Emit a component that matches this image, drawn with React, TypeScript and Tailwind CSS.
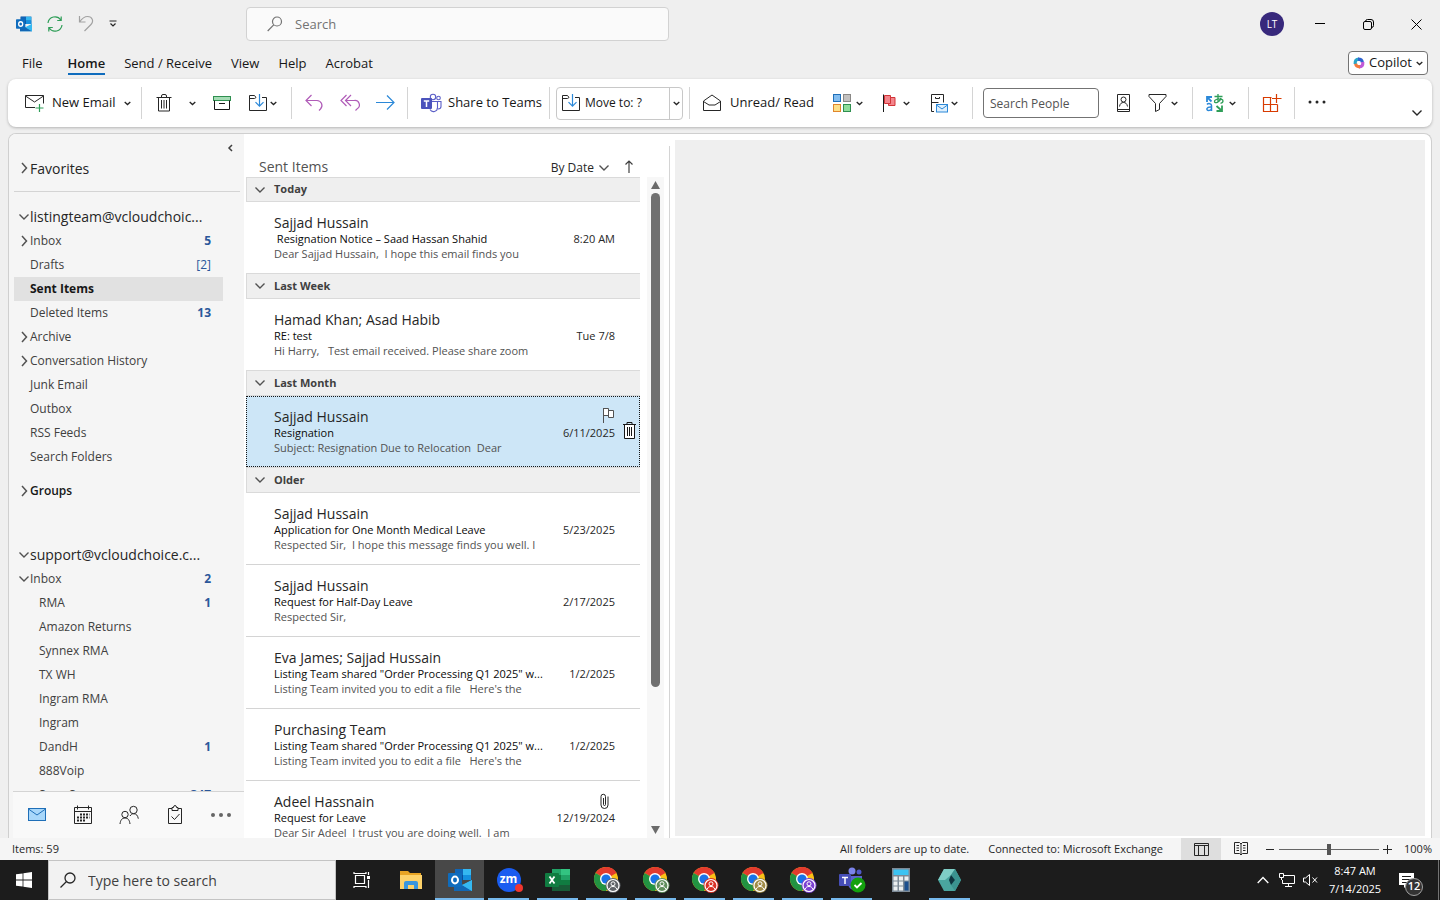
import { ReactNode } from "react";

type IconProps = { className?: string };

type SvgProps = {
  w?: number;
  h?: number;
  className?: string;
  children: ReactNode;
};

const Svg = ({ w = 20, h = 20, className = "", children }: SvgProps) => (
  <svg
    width={w}
    height={h}
    viewBox={`0 0 ${w} ${h}`}
    fill="none"
    stroke="currentColor"
    className={`shrink-0 ${className}`}
    aria-hidden="true"
  >
    {children}
  </svg>
);

/* Small shared icons */
const Caret = ({ className = "text-neutral-800" }: IconProps) => (
  <Svg w={7} h={5} className={className}>
    <path d="M.7 1l2.8 2.6L6.3 1" strokeWidth="1.3" />
  </Svg>
);

const ChevronDown = ({ className = "text-neutral-600" }: IconProps) => (
  <Svg w={12} h={8} className={className}>
    <path d="M1.5 1.5L6 6l4.5-4.5" strokeWidth="1.4" />
  </Svg>
);

const ChevronRight = ({ className = "text-neutral-600" }: IconProps) => (
  <Svg w={12} h={12} className={className}>
    <path d="M4 1l4.5 5L4 11" strokeWidth="1.5" />
  </Svg>
);

const TrashIcon = ({ className = "text-neutral-800" }: IconProps) => (
  <Svg w={16} h={20} className={className}>
    <path d="M.5 4.5h15M5.5 4.5V3q0-1.5 1.500-1.500h2q1.500 0 1.500 1.500v1.500M2.500 4.500v13.500h11V4.500M5.500 7v8.500M8 7v8.500M10.500 7v8.500" />
  </Svg>
);

const OutlookIcon = ({ size }: { size: number }) => (
  <svg width={size} height={size} viewBox="0 0 24 24" aria-hidden="true">
    <path d="M7 1h16v11H7z" fill="#0a4f9e" />
    <path d="M7 1h8v6H7z" fill="#1066b8" />
    <path d="M15 1h8v6h-8z" fill="#35b8f1" />
    <path d="M15 7h8v5h-8z" fill="#1490df" />
    <path d="M6 12l9 5 9-5v11H6z" fill="#28a8ea" />
    <path d="M6 12l18 11H6z" fill="#1267b4" />
    <path d="M24 12v11l-10-6z" fill="#35b8f1" />
    <rect y="5" width="14" height="14" rx="1" fill="#0f6cbd" />
    <ellipse cx="7" cy="12" rx="3" ry="3.400" fill="none" stroke="#fff" strokeWidth="2" />
  </svg>
);

const TeamsIcon = ({ className = "" }: IconProps) => (
  <Svg w={22} h={20} className={className}>
    <g stroke="#5b5fc7" strokeWidth="1.100">
      <circle cx="13" cy="4" r="2.700" />
      <circle cx="18.500" cy="5" r="1.800" />
      <path d="M12 8.500h5.500v6a4 4 0 0 1-7.500 2M17.500 8.500H21v5q0 2.500-3 2.500" />
    </g>
    <rect x="1" y="5" width="11" height="11" rx="1" fill="#4b53bc" stroke="none" />
    <path d="M3.800 8h5.400M6.500 8v6" stroke="#fff" strokeWidth="1.500" />
  </Svg>
);

const MoveIcon = () => (
  <Svg>
    <path d="M8 4.500L6.500 2.500h-5v15h17v-13H14M1.500 5.500h5L8 4.500" className="text-neutral-800" />
    <path d="M11.500 1v12M7.500 9.200l4 4 4-4" stroke="#2b88d8" strokeWidth="1.200" />
  </Svg>
);

/* Title bar */
const TitleBar = () => (
  <header className="flex h-12 shrink-0 items-center">
    <div className="flex w-[246px] shrink-0 items-center gap-[15px] pl-4">
      <OutlookIcon size={16} />
      <button type="button" aria-label="Send and receive all folders">
        <Svg w={16} h={16} className="text-[#2f9e58]">
          <path
            d="M1 7a7 7 0 0 1 12.800-3M15 9a7 7 0 0 1-12.800 3M14.200.500v4h-4M1.800 15.500v-4h4"
            strokeWidth="1.200"
          />
        </Svg>
      </button>
      <button type="button" aria-label="Undo">
        <Svg w={16} h={18} className="text-neutral-400">
          <path d="M1.500 1v6h6M1.500 7C4 3.500 6.500 1.500 9.500 1.500c5 0 6.500 5 3.500 8L6.500 16" strokeWidth="1.200" />
        </Svg>
      </button>
      <button type="button" aria-label="Customize toolbar">
        <Svg w={9} h={8} className="text-neutral-800">
          <path d="M.500 1h7M1.500 3.500l2.500 2.500 2.500-2.500" strokeWidth="1.200" />
        </Svg>
      </button>
    </div>

    <label className="flex h-[34px] w-[423px] items-center gap-3 rounded border border-[#d2d2d2] bg-[#fafafa] pl-5 text-neutral-500">
      <Svg w={16} h={16}>
        <circle cx="10" cy="5.500" r="4.500" strokeWidth="1.200" />
        <path d="M6.700 8.800L.700 15" strokeWidth="1.200" />
      </Svg>
      <input
        type="search"
        aria-label="Search"
        placeholder="Search"
        className="min-w-0 flex-1 bg-transparent pt-0.5 text-[13px] outline-none placeholder:text-neutral-500"
      />
    </label>

    <div className="ml-auto flex items-center">
      <button
        type="button"
        className="mr-3 size-6 rounded-full bg-[#38297c] text-[10px] text-white"
      >
        LT
      </button>
      <button type="button" aria-label="Minimize" className="flex h-12 w-12 items-center justify-center">
        <Svg w={10} h={10}>
          <path d="M0 4.500h10" />
        </Svg>
      </button>
      <button type="button" aria-label="Restore" className="flex h-12 w-12 items-center justify-center">
        <Svg w={11} h={11}>
          <rect x=".500" y="2.500" width="8" height="8" rx="1.500" />
          <path d="M2.500 2.500q0-2 2-2H8q2.500 0 2.500 2.500v3.500q0 2-2 2" />
        </Svg>
      </button>
      <button type="button" aria-label="Close" className="flex h-12 w-12 items-center justify-center">
        <Svg w={11} h={11}>
          <path d="M.500.500l10 10M10.500.500l-10 10" />
        </Svg>
      </button>
    </div>
  </header>
);

/* Ribbon tabs */
const tabs = ["Send / Receive", "View", "Help", "Acrobat"];

const CopilotIcon = () => (
  <svg width="12" height="12" viewBox="0 0 12 12" fill="none" strokeWidth="3.200" aria-hidden="true">
    <path d="M2.200 7C2 3.500 3 2.200 6 2.200" stroke="#2aa5c8" />
    <path d="M5 2.200c3.500 0 4 1 4.300 3" stroke="#2f62d0" />
    <path d="M9.800 5c.200 3.500-.800 4.800-3.800 4.800" stroke="#c05ad8" />
    <path d="M7 9.800c-3.500 0-4-1-4.300-3" stroke="#f5793b" />
  </svg>
);

const RibbonTabs = () => (
  <nav className="flex h-[31px] shrink-0 items-start pr-3 pl-[22px] text-[13px] text-neutral-900">
    <a href="#file" className="mr-[25px] leading-[30px]">
      File
    </a>
    <div className="flex gap-[19px]">
      <a href="#home" className="h-[27px] border-b-2 border-[#0f6cbd] leading-[30px] font-semibold">
        Home
      </a>
      {tabs.map((tab) => (
        <a key={tab} href={`#${tab}`} className="leading-[30px]">
          {tab}
        </a>
      ))}
    </div>
    <button
      type="button"
      className="mt-[3px] ml-auto flex h-6 w-20 items-center justify-center gap-1 rounded border border-neutral-500 bg-white"
    >
      <CopilotIcon />
      Copilot
      <Caret />
    </button>
  </nav>
);

/* Ribbon */
const Ribbon = () => (
  <div className="mx-2 flex h-12 shrink-0 items-center rounded-lg bg-white text-[13px] whitespace-nowrap text-neutral-900 shadow-[0_1px_3px_rgba(0,0,0,0.25)]">
    <div className="flex h-8 w-[134px] shrink-0 items-center gap-2 border-r border-neutral-300 pl-4">
      <button type="button" className="flex items-center gap-2">
        <Svg>
          <path d="M11 14.500H1.500v-12h18v8M1.500 3l9 6 9-6" className="text-neutral-800" />
          <path d="M15.500 11v8M11.500 15h8" stroke="#2f9e58" strokeWidth="1.200" />
        </Svg>
        New Email
      </button>
      <button type="button" aria-label="New items">
        <Caret />
      </button>
    </div>

    <div className="flex h-8 w-[150px] shrink-0 items-center justify-between border-r border-neutral-300 pr-3.5 pl-3.5">
      <button type="button" aria-label="Delete">
        <TrashIcon />
      </button>
      <button type="button" aria-label="Delete options">
        <Caret />
      </button>
      <button type="button" aria-label="Archive">
        <Svg w={18}>
          <rect x=".500" y="3.500" width="17" height="4" fill="#a5dcb5" stroke="#2f8f50" />
          <path d="M1.500 7.500v9h15v-9" />
          <path d="M6 10.500h6" />
        </Svg>
      </button>
      <button type="button" aria-label="Move" className="flex items-center gap-0.5">
        <MoveIcon />
        <Caret />
      </button>
    </div>

    <div className="flex h-8 w-[116px] shrink-0 items-center justify-between border-r border-neutral-300 pr-3 pl-3">
      <button type="button" aria-label="Reply">
        <Svg className="text-[#b05cb8]">
          <path d="M7.500 2l-5.500 5.500 5.500 5.500M2 7.500h11a5 5 0 0 1 3.500 8.500l-1.500 1.500" strokeWidth="1.200" />
        </Svg>
      </button>
      <button type="button" aria-label="Reply all">
        <Svg className="text-[#b05cb8]">
          <path
            d="M6.500 2L1 7.500 6.500 13M11 2L5.500 7.500 11 13M5.500 7.500H14a4.500 4.500 0 0 1 3.300 8.200L15.500 17.500"
            strokeWidth="1.200"
          />
        </Svg>
      </button>
      <button type="button" aria-label="Forward">
        <Svg className="text-[#2b88d8]">
          <path d="M1 9.500h18M12 2.500l7 7-7 7" strokeWidth="1.200" />
        </Svg>
      </button>
    </div>

    <div className="flex h-8 w-[142px] shrink-0 items-center border-r border-neutral-300 pl-3">
      <button type="button" className="flex items-center gap-1.5">
        <TeamsIcon />
        Share to Teams
      </button>
    </div>

    <div className="flex h-8 w-[140px] shrink-0 items-center border-r border-neutral-300 px-1.5">
      <div className="flex h-[33px] flex-1 rounded border border-[#c8c8c8] text-[12px]">
        <button type="button" className="flex flex-1 items-center gap-1 pl-1">
          <MoveIcon />
          Move to: ?
        </button>
        <button
          type="button"
          aria-label="More quick steps"
          className="flex w-[13px] items-center justify-center border-l border-[#c8c8c8]"
        >
          <Caret />
        </button>
      </div>
    </div>

    <div className="flex h-8 w-[283px] shrink-0 items-center justify-between border-r border-neutral-300 pr-3.5 pl-3">
      <button type="button" className="flex items-center gap-2">
        <Svg>
          <path d="M1.500 8l8.500-6 8.500 6v9.500h-17zM1.500 8.500L7 12h6l5.500-3.500" className="text-neutral-800" />
        </Svg>
        Unread/ Read
      </button>
      <button type="button" aria-label="Categorize" className="flex items-center gap-1">
        <Svg w={19}>
          <rect x=".500" y="1.500" width="7" height="7" fill="#83bdf0" stroke="#1f6fb8" />
          <rect x="10.500" y="1.500" width="7" height="7" fill="#c3c1c0" stroke="#8a8886" />
          <rect x=".500" y="11.500" width="7" height="7" fill="#fde08a" stroke="#e0862c" />
          <rect x="10.500" y="11.500" width="7" height="7" fill="#8fdd9a" stroke="#2f8f50" />
        </Svg>
        <Caret />
      </button>
      <button type="button" aria-label="Follow up" className="flex items-center gap-1.5">
        <Svg w={15}>
          <path d="M2.500 2.500h6v8h-6z" fill="#f4858c" stroke="#d13438" />
          <path d="M8.500 4.500h4.500v8H6.500v-2h2z" fill="#f4858c" stroke="#d13438" />
          <path d="M1.500 1.500V19" />
        </Svg>
        <Caret />
      </button>
      <button type="button" aria-label="Rules" className="flex items-center gap-0.5">
        <Svg className="text-neutral-800">
          <path d="M5 18.500H2.500V1.500h12v8M2.500 9.500h7M6.500 4v1.500h4V4" />
          <rect x="7.500" y="11.500" width="11" height="7.500" fill="#dff0fd" stroke="#2b88d8" />
          <path d="M7.500 12l5.500 4 5.500-4" stroke="#2b88d8" />
        </Svg>
        <Caret />
      </button>
    </div>

    <div className="flex h-8 w-[220px] shrink-0 items-center justify-between border-r border-neutral-300 pr-3.5 pl-2.5">
      <input
        type="text"
        aria-label="Search People"
        placeholder="Search People"
        className="h-[30px] w-[116px] rounded border border-neutral-500 px-1.5 text-[12px] outline-none placeholder:text-neutral-600"
      />
      <button type="button" aria-label="Address book">
        <Svg w={14} className="text-neutral-800">
          <path d="M.500 1.500h12v17H.500zM.500 16.500h12" />
          <circle cx="6.500" cy="6.500" r="2.500" />
          <path d="M2.500 13.500c.500-3 2-4 4-4s3.500 1 4 4" />
        </Svg>
      </button>
      <button type="button" aria-label="Filter email" className="flex items-center gap-1">
        <Svg w={19} className="text-neutral-800">
          <path d="M1 1.500h17v2l-6.500 7v6l-4 2v-8L1 3.500z" />
        </Svg>
        <Caret />
      </button>
    </div>

    <div className="flex h-8 w-14 shrink-0 items-center justify-center border-r border-neutral-300">
      <button type="button" aria-label="Translate" className="flex items-center gap-1">
        <Svg w={20}>
          <g stroke="#2b88d8" strokeWidth="1.500">
            <path d="M2 11.500c1-1.300 4.500-1.300 4.500 1V18M6.500 14c-5.500-.500-5.500 3.500-3 3.500 1.500 0 3-1 3-2" />
            <path d="M6.500 8.500L2.500 4.500M2 9V4h5" strokeWidth="1.800" />
          </g>
          <g stroke="#2f9e58" strokeWidth="1.300">
            <path d="M9.500 3.500h8M13 1v8.500M16 5c-1 4.500-6.500 6-6.500 3.500s8.500-3.500 8.500-.500c0 1.500-1 2-2.500 2.300" />
            <path d="M11.500 13l4.500 4M17 12.500V18h-5.500" strokeWidth="1.800" />
          </g>
        </Svg>
        <Caret />
      </button>
    </div>

    <div className="flex h-8 w-[46px] shrink-0 items-center justify-center border-r border-neutral-300">
      <button type="button" aria-label="All apps">
        <Svg className="text-[#d83b01]">
          <path d="M9.500 4.500h-8v14h14v-7M1.500 11.500h14M8.500 4.500v14M14.500 1v9M10 5.500h9.500" strokeWidth="1.200" />
        </Svg>
      </button>
    </div>

    <button type="button" aria-label="More commands" className="ml-3">
      <Svg className="text-neutral-800">
        <g fill="currentColor" stroke="none">
          <circle cx="3" cy="9" r="1.500" />
          <circle cx="10" cy="9" r="1.500" />
          <circle cx="17" cy="9" r="1.500" />
        </g>
      </Svg>
    </button>
    <button type="button" aria-label="Ribbon display options" className="mr-[9px] mb-2.5 ml-auto self-end">
      <ChevronDown className="text-neutral-800" />
    </button>
  </div>
);

/* Folder pane */
type Folder = {
  name: string;
  count?: string;
  plain?: boolean;
  arrow?: "right" | "down";
  active?: boolean;
  nested?: boolean;
};

const listingFolders: Folder[] = [
  { name: "Inbox", count: "5", arrow: "right" },
  { name: "Drafts", count: "[2]", plain: true },
  { name: "Sent Items", active: true },
  { name: "Deleted Items", count: "13" },
  { name: "Archive", arrow: "right" },
  { name: "Conversation History", arrow: "right" },
  { name: "Junk Email" },
  { name: "Outbox" },
  { name: "RSS Feeds" },
  { name: "Search Folders" },
];

const supportFolders: Folder[] = [
  { name: "Inbox", count: "2", arrow: "down" },
  { name: "RMA", count: "1", nested: true },
  { name: "Amazon Returns", nested: true },
  { name: "Synnex RMA", nested: true },
  { name: "TX WH", nested: true },
  { name: "Ingram RMA", nested: true },
  { name: "Ingram", nested: true },
  { name: "DandH", count: "1", nested: true },
  { name: "888Voip", nested: true },
  { name: "Spex Ser", count: "347", nested: true },
];

const FolderRow = ({ name, count, plain, arrow, active, nested }: Folder) => (
  <li className={`mr-[21px] ml-[5px] ${active ? "bg-[#e1e1e1]" : ""}`}>
    <button
      type="button"
      className={`flex h-6 w-full items-center pr-3 pl-1 text-left ${
        active ? "font-bold text-neutral-900" : "text-neutral-700"
      }`}
    >
      <span className={nested ? "w-[21px]" : "w-3"}>
        {arrow === "right" && <ChevronRight />}
        {arrow === "down" && <ChevronDown />}
      </span>
      <span className="flex-1">{name}</span>
      <span className={`text-[#2b579a] ${plain ? "" : "font-bold"}`}>{count}</span>
    </button>
  </li>
);

const Account = ({ name }: { name: string }) => (
  <button type="button" className="flex h-[25px] items-center pl-[9px] text-[14px] text-neutral-800">
    <ChevronDown />
    {name}
  </button>
);

const FolderPane = () => (
  <aside className="flex w-[235px] shrink-0 flex-col bg-[#f5f5f5] text-[12px]">
    <div className="min-h-0 flex-1 overflow-hidden">
      <div className="flex h-[22px] items-end justify-end pr-2.5 pb-1">
        <button type="button" aria-label="Collapse folder pane">
          <Svg w={7} h={8} className="text-neutral-700">
            <path d="M5 1L2 4l3 3" strokeWidth="1.500" />
          </Svg>
        </button>
      </div>
      <button type="button" className="flex h-6 items-center pl-[9px] text-[14px] text-neutral-800">
        <ChevronRight />
        Favorites
      </button>
      <hr className="mt-[11px] mr-1 mb-3 ml-[5px] border-neutral-300" />

      <Account name="listingteam@vcloudchoic..." />
      <ul>
        {listingFolders.map((folder) => (
          <FolderRow key={folder.name} {...folder} />
        ))}
      </ul>

      <button type="button" className="mt-2.5 flex h-6 items-center pl-[9px] font-semibold text-neutral-900">
        <ChevronRight />
        Groups
      </button>

      <div className="mt-[39px]">
        <Account name="support@vcloudchoice.c..." />
      </div>
      <ul>
        {supportFolders.map((folder) => (
          <FolderRow key={folder.name} {...folder} />
        ))}
      </ul>
    </div>

    <nav className="ml-1 flex h-[47px] shrink-0 items-center justify-between border-t border-neutral-300 bg-[#f9f9f9] pr-[13px] pl-[14px] text-neutral-800">
      <button type="button" aria-label="Mail">
        <Svg>
          <rect x="1.500" y="3.500" width="17" height="12" fill="#a8d7fa" stroke="#1f6fb8" />
          <path d="M1.500 4l8.500 6 8.500-6" stroke="#1f6fb8" />
        </Svg>
      </button>
      <button type="button" aria-label="Calendar">
        <Svg>
          <path d="M1.500 2.500h17v16h-17zM1.500 6.500h17M4.500.500v4M15.500.500v4" />
          <path d="M7 9.500h9.500M4 12.500h12.500M4 15.500h9" strokeDasharray="2 1" strokeWidth="2" />
        </Svg>
      </button>
      <button type="button" aria-label="People">
        <Svg>
          <circle cx="6" cy="9.500" r="3.200" />
          <circle cx="14.500" cy="5" r="3.700" />
          <path d="M1 19c.500-4 2-6 5-6s4.500 2 5 6M11 11c1-1.500 2-2.300 3.500-2.300 3 0 4.300 2 4.800 5" />
        </Svg>
      </button>
      <button type="button" aria-label="Tasks">
        <Svg>
          <path d="M7 3.500H3.500v15h13v-15H13M7 5.500v-3h1.500Q8.500.500 10 .500t1.500 2H13v3zM6.500 11.500l3 3 5-5.500" />
        </Svg>
      </button>
      <button type="button" aria-label="More">
        <Svg>
          <g fill="#666" stroke="none">
            <circle cx="2" cy="10" r="2" />
            <circle cx="10" cy="10" r="2" />
            <circle cx="18" cy="10" r="2" />
          </g>
        </Svg>
      </button>
    </nav>
  </aside>
);

/* Message list */
type Message = {
  from: string;
  subject: string;
  preview: string;
  date: string;
  selected?: boolean;
  attachment?: boolean;
};

const groups: { title: string; messages: Message[] }[] = [
  {
    title: "Today",
    messages: [
      {
        from: "Sajjad Hussain",
        subject: " Resignation Notice – Saad Hassan Shahid",
        preview: "Dear Sajjad Hussain,  I hope this email finds you",
        date: "8:20 AM",
      },
    ],
  },
  {
    title: "Last Week",
    messages: [
      {
        from: "Hamad Khan; Asad Habib",
        subject: "RE: test",
        preview: "Hi Harry,   Test email received. Please share zoom",
        date: "Tue 7/8",
      },
    ],
  },
  {
    title: "Last Month",
    messages: [
      {
        from: "Sajjad Hussain",
        subject: "Resignation",
        preview: "Subject: Resignation Due to Relocation  Dear",
        date: "6/11/2025",
        selected: true,
      },
    ],
  },
  {
    title: "Older",
    messages: [
      {
        from: "Sajjad Hussain",
        subject: "Application for One Month Medical Leave",
        preview: "Respected Sir,  I hope this message finds you well. I",
        date: "5/23/2025",
      },
      {
        from: "Sajjad Hussain",
        subject: "Request for Half-Day Leave",
        preview: "Respected Sir,",
        date: "2/17/2025",
      },
      {
        from: "Eva James; Sajjad Hussain",
        subject: 'Listing Team shared "Order Processing Q1 2025" w...',
        preview: "Listing Team invited you to edit a file   Here's the",
        date: "1/2/2025",
      },
      {
        from: "Purchasing Team",
        subject: 'Listing Team shared "Order Processing Q1 2025" w...',
        preview: "Listing Team invited you to edit a file   Here's the",
        date: "1/2/2025",
      },
      {
        from: "Adeel Hassnain",
        subject: "Request for Leave",
        preview: "Dear Sir Adeel  I trust you are doing well.  I am",
        date: "12/19/2024",
        attachment: true,
      },
    ],
  },
];

const MessageRow = ({ from, subject, preview, date, selected, attachment }: Message) => (
  <li
    className={`relative box-content flex h-[59px] pt-3 pr-[25px] pl-7 whitespace-pre ${
      selected ? "bg-[#cde6f7] outline-1 -outline-offset-1 outline-dotted outline-neutral-900" : ""
    }`}
  >
    <div className="min-w-0 flex-1">
      <p className="text-[14px] leading-[17px] text-neutral-800">{from}</p>
      <p className="text-[11px] leading-[15px] text-neutral-950">{subject}</p>
      <p className="text-[11px] leading-[15px] text-neutral-600">{preview}</p>
    </div>
    <div className="flex flex-col items-end">
      <div className="h-[17px]">
        {selected && (
          <Svg w={14} h={17} className="text-neutral-600">
            <path d="M2.500 15V0M2.500.500h5v7h-5M7.500 2.500h5v7h-5z" fill="#fff" />
          </Svg>
        )}
        {attachment && (
          <Svg w={14} h={17} className="mr-1 text-neutral-800">
            <path d="M6.500 5v6.500a1 1 0 0 0 2 0V3.500a2.200 2.200 0 0 0-4.500 0v8.500a3.500 3.500 0 0 0 7 0V3.500" />
          </Svg>
        )}
      </div>
      <p className="text-[11px] leading-[15px] text-neutral-800">{date}</p>
    </div>
    {selected && (
      <button type="button" aria-label="Delete message" className="absolute top-[25px] right-[3px]">
        <Svg w={16} h={19} className="text-neutral-900">
          <path d="M3.500 3.500h10v14h-10z" fill="#fff" />
          <path d="M2 3.500h13M6 3V1.500h5V3M6.500 6v9M8.500 6v9M10.500 6v9" />
        </Svg>
      </button>
    )}
  </li>
);

const MessageList = () => (
  <section className="flex w-[426px] shrink-0 flex-col overflow-hidden bg-white pt-3">
    <div className="flex min-h-0 flex-1 border-r border-neutral-300">
      <div className="ml-0.5 flex min-w-0 flex-1 flex-col overflow-hidden">
        <div className="flex h-[31px] shrink-0 items-end pb-px pl-[13px]">
          <h1 className="flex-1 text-[14px] leading-[18px] text-neutral-600">Sent Items</h1>
          <button type="button" className="flex items-center gap-1 text-[12px] leading-[17px] text-neutral-800">
            By Date
            <ChevronDown />
          </button>
          <button type="button" aria-label="Reverse sort order" className="mr-1 ml-3 pb-0.5">
            <Svg w={14} h={14} className="text-neutral-700">
              <path d="M7 13V1M3.500 4.500L7 1l3.500 3.500" strokeWidth="1.200" />
            </Svg>
          </button>
        </div>
        {groups.map((group, i) => (
          <div key={group.title} className="shrink-0">
            <button
              type="button"
              className={`flex w-full items-center gap-2 border-t border-b border-l border-[#dadada] bg-[#efefef] pl-[7px] text-[11px] font-bold text-neutral-700 ${
                i === 0 ? "h-[25px]" : "h-[26px]"
              }`}
            >
              <ChevronDown />
              {group.title}
            </button>
            <ul className={group.messages.length > 1 ? "divide-y divide-neutral-300" : ""}>
              {group.messages.map((message, j) => (
                <MessageRow key={j} {...message} />
              ))}
            </ul>
          </div>
        ))}
      </div>

      <div className="mt-[31px] mr-[5px] ml-[7px] flex w-[17px] flex-col items-center bg-[#f7f7f7] py-1">
        <Svg w={9} h={8}>
          <path d="M4.500 0L9 8H0z" fill="#6b6b6b" stroke="none" />
        </Svg>
        <div className="flex w-[9px] flex-1 flex-col py-1">
          <div className="h-[78.5%] rounded-full bg-[#707070]" />
        </div>
        <Svg w={9} h={8}>
          <path d="M4.500 8L9 0H0z" fill="#6b6b6b" stroke="none" />
        </Svg>
      </div>
    </div>
  </section>
);

/* Status bar */
const StatusBar = () => (
  <footer className="flex h-[22px] shrink-0 items-center bg-[#f5f5f5] pr-2 pl-3 text-[11px] text-neutral-800">
    <span className="flex-1">Items: 59</span>
    <span>All folders are up to date.</span>
    <span className="mr-[18px] ml-[19px]">Connected to: Microsoft Exchange</span>
    <button type="button" aria-label="Normal view" className="flex h-full w-10 items-center justify-center bg-[#dedede]">
      <Svg w={15} h={13}>
        <path d="M.500.500h14v12H.500zM4.500 3v9.500M10.500 3v9.500M.500 2.500h14" />
      </Svg>
    </button>
    <button type="button" aria-label="Reading view" className="flex h-full w-10 items-center justify-center">
      <Svg w={14} h={14}>
        <path d="M.500.500h5L7 2l1.500-1.500h5v11h-5L7 13l-1.500-1.500h-5zM7 2v11M2.500 3.500H5M2.500 6H5M2.500 8.500H5M9 3.500h2.500M9 6h2.500M9 8.500h2.500" />
      </Svg>
    </button>
    <button type="button" aria-label="Zoom out" className="ml-[5px]">
      <Svg w={9} h={9}>
        <path d="M0 4.500h8" />
      </Svg>
    </button>
    <input
      type="range"
      aria-label="Zoom"
      defaultValue={50}
      className="mx-1 h-3 w-[100px] appearance-none bg-[linear-gradient(#666,#666)] bg-[length:100%_1px] bg-center bg-no-repeat [&::-webkit-slider-thumb]:h-[11px] [&::-webkit-slider-thumb]:w-1 [&::-webkit-slider-thumb]:appearance-none [&::-webkit-slider-thumb]:bg-[#555]"
    />
    <button type="button" aria-label="Zoom in">
      <Svg w={9} h={9}>
        <path d="M0 4.500h9M4.500 0v9" />
      </Svg>
    </button>
    <span className="w-10 text-right">100%</span>
  </footer>
);

/* Windows taskbar */
const ChromeIcon = ({ color }: { color: string }) => (
  <svg width="28" height="28" viewBox="0 0 28 28" aria-hidden="true">
    <circle cx="13" cy="13" r="12" fill="#fbc116" />
    <path d="M13 13L2.600 7A12 12 0 0 1 23.400 7z" fill="#e33b2e" />
    <path d="M13 1a12 12 0 0 1 10.400 6H13z" fill="#e33b2e" />
    <path d="M2.600 7A12 12 0 0 0 13 25l5.200-9L13 13z" fill="#229342" />
    <circle cx="13" cy="13" r="6" fill="#fff" />
    <circle cx="13" cy="13" r="4.600" fill="#1a73e8" />
    <circle cx="20" cy="19.500" r="7.500" fill={color} />
    <circle cx="20" cy="19.500" r="6" fill="none" stroke="#fff" strokeWidth="1.200" />
    <circle cx="20" cy="17.800" r="2" fill="none" stroke="#fff" />
    <path d="M16.300 23c.700-2 2-2.500 3.700-2.500s3 .500 3.700 2.500" fill="none" stroke="#fff" />
  </svg>
);

const ExplorerIcon = () => (
  <svg width="24" height="22" viewBox="0 0 24 22" aria-hidden="true">
    <path d="M1 2h8l2 2h11v5H1z" fill="#e8a424" />
    <path d="M1 6h22v14H1z" fill="#fdd26a" />
    <path d="M5 20v-6q0-2 2-2h10q2 0 2 2v6h-4v-4H9v4z" fill="#3a96dd" />
  </svg>
);

const ZoomIcon = () => (
  <span className="relative flex size-6 items-center justify-center rounded-full bg-[#1a5cf0] pb-0.5 text-[12px] font-bold text-white">
    zm
    <span className="absolute -right-0.5 bottom-0 size-2 rounded-full bg-[#f0362f]" />
  </span>
);

const ExcelIcon = () => (
  <svg width="26" height="24" viewBox="0 0 26 24" aria-hidden="true">
    <path d="M7 1h18v22H7z" fill="#21a366" />
    <path d="M16 1h9v6h-9z" fill="#33c481" />
    <path d="M7 7h9v10H7z" fill="#107c41" />
    <path d="M7 17h18v6H7z" fill="#185c37" />
    <path d="M16 12h9v5h-9z" fill="#107c41" />
    <rect y="5" width="14" height="14" rx="1" fill="#107c41" />
    <path d="M4.500 8.500l5 7M9.500 8.500l-5 7" stroke="#fff" strokeWidth="1.800" />
  </svg>
);

const TeamsTaskIcon = () => (
  <svg width="28" height="26" viewBox="0 0 28 26" aria-hidden="true">
    <circle cx="14" cy="4" r="3.500" fill="#7b83eb" />
    <circle cx="21" cy="5" r="2.500" fill="#5059c9" />
    <path d="M10 9h14v8q-2 6-7 6-6 0-7-6z" fill="#5b62cf" />
    <rect x="1" y="7" width="12" height="12" rx="1" fill="#464eb8" />
    <path d="M4 10.500h6M7 10.500V17" stroke="#fff" strokeWidth="1.500" />
    <circle cx="20" cy="18" r="7.500" fill="#13a10e" />
    <path d="M16.500 18l2.500 2.500 4.500-4.500" fill="none" stroke="#fff" strokeWidth="1.800" />
  </svg>
);

const CalculatorIcon = () => (
  <svg width="18" height="24" viewBox="0 0 18 24" aria-hidden="true">
    <path d="M0 0h18v24H0z" fill="#7d8a96" />
    <path d="M1.500 1.500h15V7h-15z" fill="#3cc3f2" />
    <g fill="#eceff1">
      <path d="M1.500 8.500h4v4h-4zM7 8.500h4v4H7zM12.500 8.500h4v4h-4zM1.500 13.500h4v4h-4zM7 13.500h4v4H7zM1.500 18.500h4v4h-4zM7 18.500h4v4H7z" />
    </g>
    <path d="M12.500 13.500h4v9h-4z" fill="#1b4f8f" />
  </svg>
);

const HexIcon = () => (
  <svg width="24" height="22" viewBox="0 0 24 22" aria-hidden="true">
    <path d="M6 0h11l6 11-6 11H6L0 11z" fill="#4aa59f" />
    <path d="M6 0h11l-4 6-6 5H0z" fill="#7fcdc6" />
    <path d="M17 0l6 11-6 11-4-6 4-5-4-5z" fill="#3b9390" />
    <path d="M13 6l4 5-4 5-2-5z" fill="#0e3540" />
  </svg>
);

const TaskViewIcon = () => (
  <Svg w={18} h={18} className="text-white">
    <path d="M2.500 4.500h9v8h-9zM1 1v1.500h12V1M1 17v-1.500h12V17M15.500 1v3M15.500 9v8" strokeWidth="1.200" />
    <path d="M14 5h3v3h-3z" fill="currentColor" stroke="none" />
  </Svg>
);

const apps: { name: string; icon: ReactNode; open?: boolean; active?: boolean }[] = [
  { name: "Task View", icon: <TaskViewIcon /> },
  { name: "File Explorer", icon: <ExplorerIcon /> },
  { name: "Outlook", icon: <OutlookIcon size={24} />, open: true, active: true },
  { name: "Zoom", icon: <ZoomIcon />, open: true },
  { name: "Excel", icon: <ExcelIcon />, open: true },
  { name: "Chrome, profile 1", icon: <ChromeIcon color="#5f6368" />, open: true },
  { name: "Chrome, profile 2", icon: <ChromeIcon color="#5f8f5c" />, open: true },
  { name: "Chrome, profile 3", icon: <ChromeIcon color="#d93025" />, open: true },
  { name: "Chrome, profile 4", icon: <ChromeIcon color="#a08b45" />, open: true },
  { name: "Chrome, profile 5", icon: <ChromeIcon color="#7b3fd0" />, open: true },
  { name: "Teams", icon: <TeamsTaskIcon />, open: true },
  { name: "Calculator", icon: <CalculatorIcon /> },
  { name: "Hex", icon: <HexIcon />, open: true },
];

const Taskbar = () => (
  <div className="flex h-10 shrink-0 items-stretch bg-[#1c1c1c] text-white">
    <button type="button" aria-label="Start" className="flex w-12 items-center justify-center">
      <Svg w={16} h={16}>
        <path
          d="M0 2.300L6.600 1.400v6.200H0zM7.400 1.300L16 0v7.600H7.400zM0 8.400h6.600v6.200L0 13.700zM7.400 8.400H16V16l-8.600-1.300z"
          fill="#fff"
          stroke="none"
        />
      </Svg>
    </button>
    <label className="mr-px flex w-72 items-center gap-3 border border-[#c4c4c4] bg-[#f2f2f2] pl-[11px] text-neutral-800">
      <Svg w={16} h={16}>
        <circle cx="10" cy="6" r="5" strokeWidth="1.300" />
        <path d="M6.500 9.500L.500 15.500" strokeWidth="1.300" />
      </Svg>
      <input
        type="search"
        aria-label="Type here to search"
        placeholder="Type here to search"
        className="min-w-0 flex-1 bg-transparent text-[14px] outline-none placeholder:text-neutral-700"
      />
    </label>

    {apps.map((app) => (
      <button
        key={app.name}
        type="button"
        aria-label={app.name}
        className={`relative flex w-[49px] items-center justify-center ${app.active ? "bg-[#484848]" : ""}`}
      >
        {app.icon}
        {app.open && (
          <span
            className={`absolute bottom-0 h-0.5 bg-[#76b9ed] ${app.active ? "inset-x-0" : "inset-x-1"}`}
          />
        )}
      </button>
    ))}

    <div className="ml-auto flex items-center">
      <button type="button" aria-label="Show hidden icons" className="mr-2.5">
        <Svg w={12} h={8}>
          <path d="M.700 7L6 1.500 11.300 7" strokeWidth="1.300" />
        </Svg>
      </button>
      <button type="button" aria-label="Network" className="mr-2">
        <Svg w={16} h={15}>
          <path d="M5 2.500h10.500v8H3.500V7M9.500 10.500v3M6 13.500h7M.500.500h4v4h-4zM2.500 4.500V7" />
        </Svg>
      </button>
      <button type="button" aria-label="Volume muted" className="mr-[11px]">
        <Svg w={15} h={14}>
          <path d="M.500 5v4h2l4 3.500v-11L2.500 5zM9.500 4.500l4.500 5M14 4.500l-4.500 5" />
        </Svg>
      </button>
      <div className="w-[52px] text-center text-[11px] leading-[18px] whitespace-nowrap">
        <p>8:47 AM</p>
        <p>7/14/2025</p>
      </div>
      <button type="button" aria-label="Notifications" className="relative mr-5 ml-[17px] pt-px">
        <Svg w={20} h={20}>
          <path d="M1 2h15v12H9l-3 3v-3H1z" fill="#fff" stroke="none" />
          <path d="M4 5.500h9M4 8.500h9M4 11.500h5" stroke="#1c1c1c" />
        </Svg>
        <span className="absolute top-2 left-[7px] flex size-[18px] items-center justify-center rounded-full border border-neutral-400 bg-[#333] text-[11px] font-semibold">
          12
        </span>
      </button>
      <div className="h-full w-0.5 border-l border-neutral-500" />
    </div>
  </div>
);

export default function App() {
  return (
    <div className="flex h-screen flex-col overflow-hidden bg-[#efefef] font-['Open_Sans','Noto_Sans',sans-serif]">
      <TitleBar />
      <RibbonTabs />
      <Ribbon />
      <main className="mx-2 mt-1.5 flex min-h-0 flex-1 overflow-hidden rounded-t-lg border border-b-0 border-[#cfcfcf] bg-white">
        <FolderPane />
        <MessageList />
        <section aria-label="Reading pane" className="mt-1.5 mr-1.5 mb-0.5 ml-[5px] flex-1 bg-[#efefef]" />
      </main>
      <StatusBar />
      <Taskbar />
    </div>
  );
}
